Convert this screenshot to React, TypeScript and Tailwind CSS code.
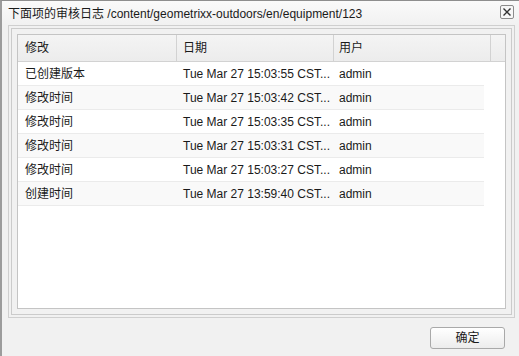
const rows = [
  { action: "已创建版本", date: "Tue Mar 27 15:03:55 CST...", user: "admin" },
  { action: "修改时间", date: "Tue Mar 27 15:03:42 CST...", user: "admin" },
  { action: "修改时间", date: "Tue Mar 27 15:03:35 CST...", user: "admin" },
  { action: "修改时间", date: "Tue Mar 27 15:03:31 CST...", user: "admin" },
  { action: "修改时间", date: "Tue Mar 27 15:03:27 CST...", user: "admin" },
  { action: "创建时间", date: "Tue Mar 27 13:59:40 CST...", user: "admin" },
];

const App = (): JSX.Element => {
  return (
    <div className="w-[519px] h-[356px] flex flex-col bg-[#f1f1f1] border-l-2 border-l-[#9c9c9c] border-t border-t-[#8e8e8e] font-['Liberation_Sans','Noto_Sans_CJK_SC',sans-serif] text-[12px] text-[#1a1a1a] overflow-hidden">
      {/* title bar */}
      <div className="h-[24px] flex items-center pl-[6px] pr-[5px] bg-gradient-to-b from-[#fafafa] to-[#f1f1f1]">
        <span className="leading-none pt-[1px]">
          下面项的审核日志 /content/geometrixx-outdoors/en/equipment/123
        </span>
        <button className="ml-auto w-[14px] h-[14px] flex items-center justify-center rounded-[2px] border border-[#8c8c8c] bg-[#f7f7f7] mt-[-3px]">
          <svg width="10" height="10" viewBox="0 0 10 10">
            <path d="M1.5 1.5 L8.5 8.5 M8.5 1.5 L1.5 8.5" stroke="#333" strokeWidth="1.4" />
          </svg>
        </button>
      </div>

      {/* framed grid */}
      <div className="pl-[6px]">
        <div className="w-[507px] h-[293px] border border-[#cfcfcf] p-[2px]">
          <div className="h-full border border-[#cbcbcb] p-[5px]">
            <div className="h-full border border-[#c4c4c4] bg-white flex flex-col">
              <div className="h-[27px] flex bg-gradient-to-b from-[#f4f4f4] to-[#ececec] border-b border-[#d2d2d2]">
                <div className="w-[159px] border-r border-[#d2d2d2] pl-[7px] flex items-center">修改</div>
                <div className="w-[157px] border-r border-[#d2d2d2] pl-[6px] flex items-center">日期</div>
                <div className="w-[157px] border-r border-[#d2d2d2] pl-[5px] flex items-center">用户</div>
                <div className="flex-1" />
              </div>
              <div className="w-[466px] flex flex-col">
                {rows.map((row, i) => (
                  <div
                    key={i}
                    className={`h-[24px] flex items-center border-b border-[#ebebeb] ${
                      i % 2 === 1 ? "bg-[#f9f9f9]" : "bg-white"
                    }`}
                  >
                    <div className="w-[159px] pl-[7px] whitespace-nowrap">{row.action}</div>
                    <div className="w-[157px] pl-[6px] whitespace-nowrap">{row.date}</div>
                    <div className="flex-1 pl-[5px] whitespace-nowrap">{row.user}</div>
                  </div>
                ))}
              </div>
            </div>
          </div>
        </div>
      </div>

      {/* footer */}
      <div className="flex justify-end pr-[14px] pt-[9px]">
        <button className="w-[75px] h-[22px] rounded-[3px] border border-[#a9a9a9] bg-gradient-to-b from-[#ffffff] to-[#ececec] flex items-center justify-center">
          确定
        </button>
      </div>
    </div>
  );
};

export default App;
